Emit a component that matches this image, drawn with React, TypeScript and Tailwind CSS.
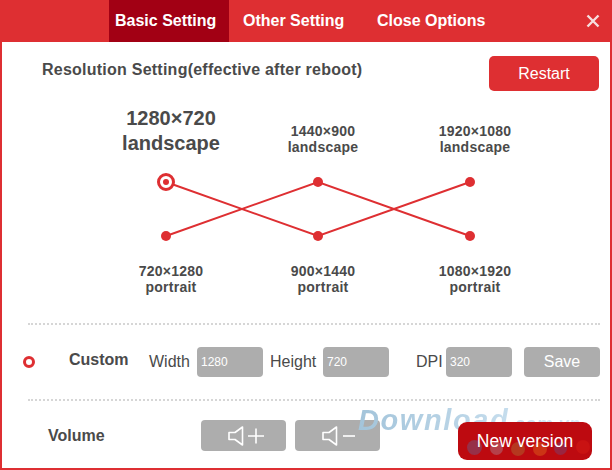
import React from 'react';

const tabs = ['Basic Setting', 'Other Setting', 'Close Options'];

const topLabels = ['1440×900', '1920×1080'];
const bottomLabels = ['720×1280', '900×1440', '1080×1920'];

const Speaker: React.FC<{ minus?: boolean }> = ({ minus }) => (
    <svg className="ml-[4px]" width="36" height="22" viewBox="0 0 36 22" fill="none" stroke="#fff" strokeWidth="1.6">
        <path d="M1 7.5h6L14.5 2v18L7 14.5H1z" strokeLinejoin="round" />
        {minus ? <path d="M21 11h12" /> : <path d="M20 11h16M28 3.5v15" />}
    </svg>
);

const Field: React.FC<{ value: string }> = ({ value }) => (
    <div className="h-[30px] w-[66px] rounded-[4px] bg-[#adadad] pl-[4px] text-[12px] leading-[30px] text-white">{value}</div>
);

export default function App() {
    return (
        <div className="relative flex h-[470px] w-[612px] flex-col overflow-hidden bg-white font-['Liberation_Sans',Arial,sans-serif] text-[#4a4a4a]">
            <header className="flex h-[42px] shrink-0 items-stretch bg-[#de2f32] pl-[109px] text-white">
                {tabs.map((tab, i) => (
                    <div
                        key={tab}
                        className={`flex items-center text-[16px] font-bold ${i === 0 ? 'w-[120px] bg-[#a20014] pl-[6px]' : i === 1 ? 'ml-[14px] w-[134px]' : 'w-[130px]'}`}
                    >
                        {tab}
                    </div>
                ))}
                <div className="ml-auto mr-[12px] flex items-center">
                    <svg width="14" height="14" viewBox="0 0 14 14" stroke="#f6dede" strokeWidth="2.4">
                        <path d="M1.5 1.5l11 11M12.5 1.5l-11 11" />
                    </svg>
                </div>
            </header>

            <main className="flex min-h-0 flex-1 flex-col border-x-2 border-b-2 border-[#de2f32]">
                <div className="mt-[14px] flex h-[35px] items-start justify-between pl-[40px] pr-[11px]">
                    <h1 className="mt-[5px] text-[16px] leading-[18px] font-bold tracking-[0.24px]">Resolution Setting(effective after reboot)</h1>
                    <button className="h-[35px] w-[110px] rounded-[5px] bg-[#de2f32] pt-[1px] text-[16px] text-white">Restart</button>
                </div>

                <div className="ml-[93px] mt-[15px] grid h-[50px] w-[456px] grid-cols-3 items-end text-center font-bold">
                    <div className="text-[20px] leading-[25px]">
                        1280×720
                        <br />
                        landscape
                    </div>
                    {topLabels.map(label => (
                        <div key={label} className="pb-[1px] text-[14px] leading-[16px] tracking-[0.25px]">
                            {label}
                            <br />
                            landscape
                        </div>
                    ))}
                </div>

                <svg className="ml-[93px] mt-[12px] shrink-0" width="400" height="80" viewBox="0 0 400 80">
                    <g stroke="#de2f32" strokeWidth="2" fill="none">
                        <path d="M71 14L223 68L375 14" />
                        <path d="M71 68L223 14L375 68" />
                    </g>
                    <g fill="#de2f32">
                        <circle cx="223" cy="14" r="5" />
                        <circle cx="375" cy="14" r="5" />
                        <circle cx="71" cy="68" r="5" />
                        <circle cx="223" cy="68" r="5" />
                        <circle cx="375" cy="68" r="5" />
                    </g>
                    <circle cx="71" cy="14" r="7.5" fill="#fff" stroke="#de2f32" strokeWidth="3" />
                    <circle cx="71" cy="14" r="3" fill="#de2f32" />
                </svg>

                <div className="ml-[93px] mt-[15px] grid w-[456px] grid-cols-3 text-center text-[14px] leading-[16px] font-bold tracking-[0.25px]">
                    {bottomLabels.map(label => (
                        <div key={label}>
                            {label}
                            <br />
                            portrait
                        </div>
                    ))}
                </div>

                <div className="ml-[26px] mr-[10px] mt-[28px] border-t-2 border-dotted border-[#d6d6d6]" />

                <div className="mt-[22px] flex h-[30px] items-center pl-[21px] text-[16px]">
                    <span className="h-[12px] w-[12px] rounded-full border-[3px] border-[#de2f32]" />
                    <span className="ml-[34px] w-[80px] pb-[4px] text-[16px] font-bold">Custom</span>
                    <span className="w-[48px]">Width</span>
                    <Field value="1280" />
                    <span className="ml-[7px] w-[53px]">Height</span>
                    <Field value="720" />
                    <span className="ml-[27px] w-[30px]">DPI</span>
                    <Field value="320" />
                    <button className="ml-[12px] h-[30px] w-[76px] rounded-[4px] bg-[#adadad] text-[16px] text-white">Save</button>
                </div>

                <div className="ml-[26px] mr-[10px] mt-[22px] border-t-2 border-dotted border-[#d6d6d6]" />

                <div className="mt-[19px] flex h-[31px] items-center pl-[46px]">
                    <span className="w-[153px] text-[16px] font-bold">Volume</span>
                    <button className="flex h-[31px] w-[85px] items-center justify-center rounded-[4px] bg-[#adadad]">
                        <Speaker />
                    </button>
                    <button className="ml-[9px] flex h-[31px] w-[85px] items-center justify-center rounded-[4px] bg-[#adadad]">
                        <Speaker minus />
                    </button>
                </div>
            </main>

            {/* watermark and the floating button lie over the page */}
            <div className="absolute left-[358px] top-[404px] bg-linear-to-r from-[#a3c4da] to-[#d6e9f6] bg-clip-text text-[29px] leading-[32px] font-bold tracking-[1.6px] text-transparent italic">
                Download<span className="text-[18px] tracking-[0.5px]">.com.vn</span>
            </div>
            <div className="absolute left-[458px] top-[422px] flex h-[38px] w-[134px] items-center justify-center rounded-[9px] bg-[#bd0a10] text-[17.5px] text-white">
                <span className="absolute left-[9px] top-[18px] h-[15px] w-[15px] rounded-full bg-[#963048]" />
                <span className="absolute left-[32px] top-[20px] h-[13px] w-[13px] rounded-full bg-[#b5404a]" />
                <span className="absolute left-[53px] top-[20px] h-[14px] w-[14px] rounded-full bg-[#b5381f]" />
                <span className="absolute left-[75px] top-[20px] h-[14px] w-[14px] rounded-full bg-[#cc3415]" />
                <span className="absolute left-[96px] top-[20px] h-[13px] w-[13px] rounded-full bg-[#9a2540]" />
                <span className="absolute left-[118px] top-[18px] h-[14px] w-[14px] rounded-full bg-[#c91212]" />
                <span className="relative">New version</span>
            </div>
        </div>
    );
}
